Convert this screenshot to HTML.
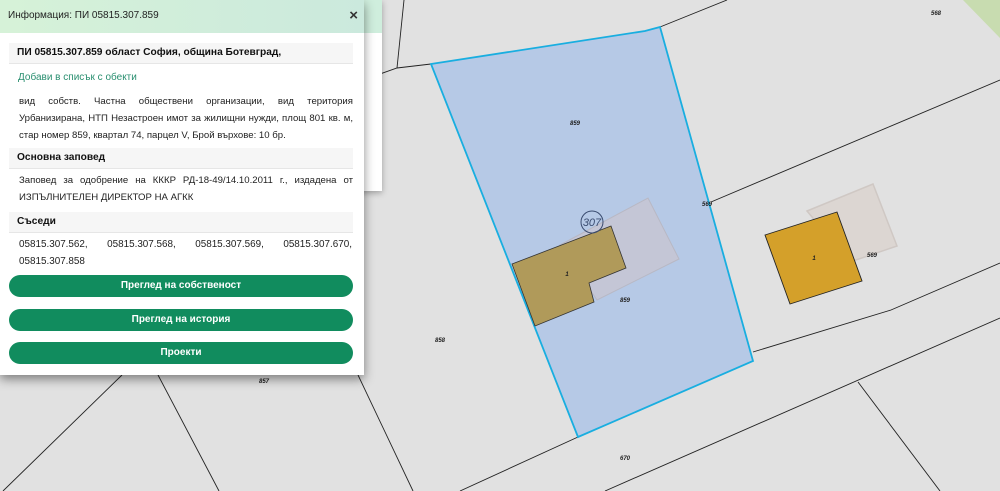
<!DOCTYPE html>
<html><head><meta charset="utf-8"><style>
body{margin:0;width:1000px;height:491px;overflow:hidden;background:#e1e1e1;font-family:"Liberation Sans","DejaVu Sans",sans-serif;position:relative}
svg{position:absolute;left:0;top:0}
.back{position:absolute;left:0;top:0;width:382px;height:191px;background:#fff;box-shadow:0 2px 6px rgba(0,0,0,.3)}
.back .h{height:33px;background:#cfeedd}
.panel{position:absolute;left:0;top:0;width:364px;height:375px;background:#fff;box-shadow:0 4px 10px rgba(0,0,0,.45)}
.hd{height:33px;background:linear-gradient(90deg,#d6f2d8,#cbe9dd);font-size:10px;color:#222;line-height:32px;padding-left:8px;position:relative}
.hd .x{position:absolute;right:6px;top:0;font-size:15px;font-weight:bold;color:#333}
.sec{position:absolute;left:9px;width:336px;background:#f6f6f6;border-bottom:1px solid #e6e6e6;font-weight:bold;font-size:10.2px;color:#111;padding-left:8px;height:20px;line-height:20px}
.t{position:absolute;left:19px;width:334px;font-size:9.6px;color:#222;line-height:17px;text-align:justify}
.lnk{position:absolute;left:18px;top:72px;font-size:10px;color:#2a8f70}
.nb{position:absolute;left:19px;width:333px;top:236px;font-size:9.9px;color:#222;line-height:17px}
.nb .r{display:flex;justify-content:space-between}
.btn{position:absolute;left:9px;width:344px;height:22px;border-radius:11px;background:#118c5e;color:#fff;font-weight:bold;font-size:10px;text-align:center;line-height:22px}
</style></head><body>
<svg width="1000" height="491" viewBox="0 0 1000 491">
<polygon points="963,0 1000,0 1000,38" fill="#c8dcb0"/>
<g stroke="#222" stroke-width="0.9" fill="none">
<polyline points="404,0 397,68"/>
<polyline points="380,74 397,68 431,64"/>
<polyline points="660,27 727,0"/>
<polyline points="711,202 1000,80"/>
<polyline points="753,352 891,310 1000,263"/>
<polyline points="578,437 460,491"/>
<polyline points="605,491 1000,318"/>
<polyline points="858,382 940,491"/>
<polyline points="358,375 413,491"/>
<polyline points="122,375 3,491"/>
<polyline points="158,375 219,491"/>
</g>
<polygon points="431,64 645,31 660,27 753,361 578,437" fill="#b6c9e6" stroke="#19aee0" stroke-width="1.8"/>
<polygon points="560,245 648,198 679,259 597,300" fill="#c4c6d6" stroke="#b8b8c4" stroke-width="1"/>
<polygon points="512,264 611,226 626,268 589,283 594,302 535,326" fill="#b09a5a" stroke="#333" stroke-width="0.8"/>
<polygon points="807,211 873,184 897,246 850,262" fill="#dcd6d2" stroke="#cfc8c4" stroke-width="1.5"/>
<polygon points="765,235 837,212 862,281 790,304" fill="#d4a02a" stroke="#222" stroke-width="0.9"/>
<circle cx="592" cy="222" r="11" fill="none" stroke="#3a4c70" stroke-width="1"/>
<g font-family="Liberation Sans,sans-serif" font-size="6" font-style="italic" font-weight="bold" fill="#222" text-anchor="middle">
<text x="592" y="226" font-size="11" font-weight="normal" fill="#3a4c70">307</text>
<text x="936" y="15">568</text>
<text x="575" y="125">859</text>
<text x="707" y="206">569</text>
<text x="567" y="276">1</text>
<text x="625" y="302">859</text>
<text x="872" y="257">569</text>
<text x="814" y="260">1</text>
<text x="440" y="342">858</text>
<text x="625" y="460">670</text>
<text x="264" y="383">857</text>
</g>
</svg>
<div class="back"><div class="h"></div></div>
<div class="panel">
<div class="hd">Информация: ПИ 05815.307.859<span class="x">×</span></div>
<div class="sec" style="top:43px">ПИ 05815.307.859 област София, община Ботевград,</div>
<div class="lnk">Добави в списък с обекти</div>
<div class="t" style="top:93px">вид собств. Частна обществени организации, вид територия Урбанизирана, НТП Незастроен имот за жилищни нужди, площ 801 кв.&nbsp;м, стар номер 859, квартал 74, парцел V, Брой върхове: 10 бр.</div>
<div class="sec" style="top:148px">Основна заповед</div>
<div class="t" style="top:172px">Заповед за одобрение на КККР РД-18-49/14.10.2011 г., издадена от ИЗПЪЛНИТЕЛЕН ДИРЕКТОР НА АГКК</div>
<div class="sec" style="top:212px">Съседи</div>
<div class="nb"><div class="r"><span>05815.307.562,</span><span>05815.307.568,</span><span>05815.307.569,</span><span>05815.307.670,</span></div>05815.307.858</div>
<div class="btn" style="top:275px">Преглед на собственост</div>
<div class="btn" style="top:309px">Преглед на история</div>
<div class="btn" style="top:342px">Проекти</div>
</div>
</body></html>
